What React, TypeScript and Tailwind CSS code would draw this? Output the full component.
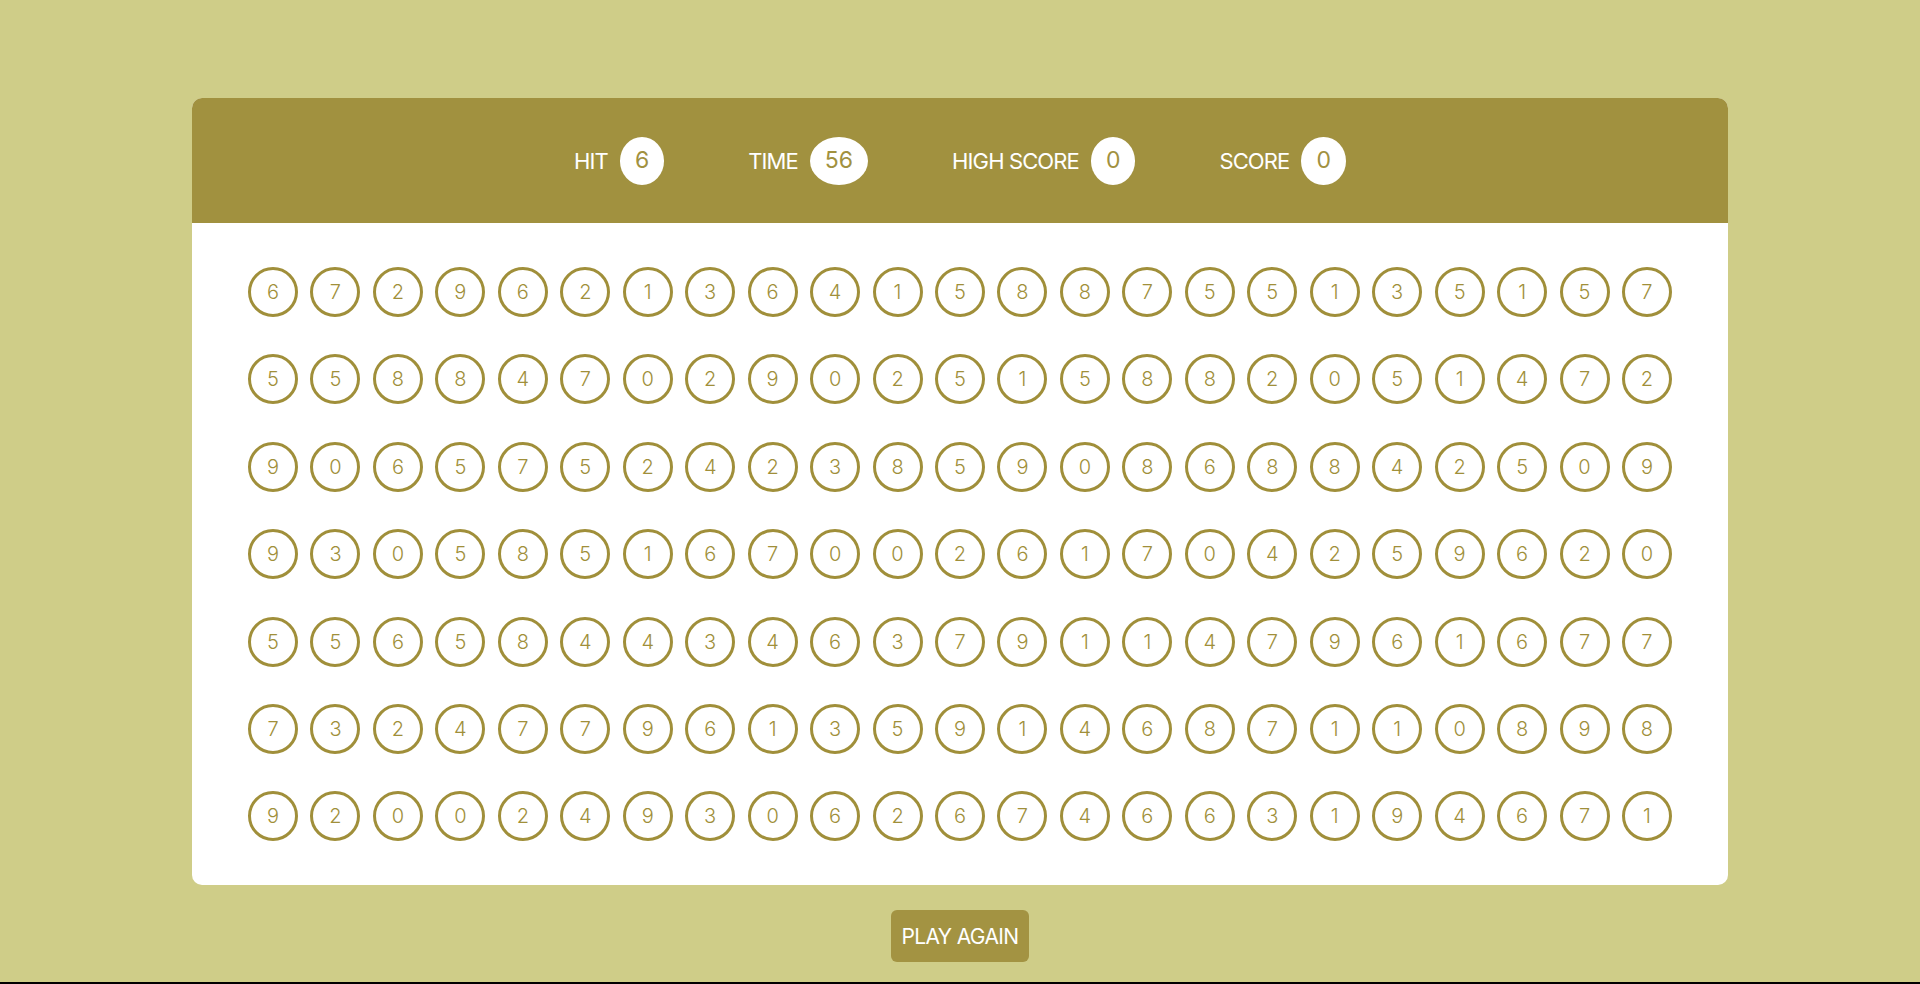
import React from "react";

const rows = [
  "6 7 2 9 6 2 1 3 6 4 1 5 8 8 7 5 5 1 3 5 1 5 7",
  "5 5 8 8 4 7 0 2 9 0 2 5 1 5 8 8 2 0 5 1 4 7 2",
  "9 0 6 5 7 5 2 4 2 3 8 5 9 0 8 6 8 8 4 2 5 0 9",
  "9 3 0 5 8 5 1 6 7 0 0 2 6 1 7 0 4 2 5 9 6 2 0",
  "5 5 6 5 8 4 4 3 4 6 3 7 9 1 1 4 7 9 6 1 6 7 7",
  "7 3 2 4 7 7 9 6 1 3 5 9 1 4 6 8 7 1 1 0 8 9 8",
  "9 2 0 0 2 4 9 3 0 6 2 6 7 4 6 6 3 1 9 4 6 7 1",
];
const nums = rows.join(" ").split(" ");

function Stat({ label, value }: { label: string; value: string }) {
  return (
    <div className="flex items-center gap-[12px]">
      <span className="text-white text-[22px] tracking-[-0.04em] leading-none">{label}</span>
      <span className="h-[48px] px-[15px] rounded-[50%] bg-white text-[#a1913f] text-[23px] flex items-center justify-center leading-none">
        {value}
      </span>
    </div>
  );
}

export default function App() {
  return (
    <div
      className="min-h-[984px] bg-[#cfcd88] flex flex-col items-center relative"
      style={{ fontFamily: "Inter, 'Noto Sans', sans-serif" }}
    >
      <div className="mt-[98px] w-[1536px] rounded-[10px] overflow-hidden bg-white">
        <div className="h-[125px] bg-[#a1913f] flex items-center justify-center gap-[84px]">
          <Stat label="HIT" value="6" />
          <Stat label="TIME" value="56" />
          <Stat label="HIGH SCORE" value="0" />
          <Stat label="SCORE" value="0" />
        </div>
        <div className="px-[56px] pt-[44px] pb-[44px] flex flex-wrap justify-between gap-x-[12px] gap-y-[37.4px]">
          {nums.map((n, i) => (
            <div
              key={i}
              className="w-[50px] h-[50px] rounded-full border-[3px] border-[#a08f3a] flex items-center justify-center text-[#a08f3a] text-[20px] font-light leading-none"
            >
              {n}
            </div>
          ))}
        </div>
      </div>
      <button className="mt-[25px] w-[138px] h-[52px] rounded-[6px] bg-[#a39342] text-white text-[21px] tracking-[-0.03em] leading-none">
        PLAY AGAIN
      </button>
      <div className="absolute left-0 right-0 bottom-0 h-[2px] bg-black" />
    </div>
  );
}
